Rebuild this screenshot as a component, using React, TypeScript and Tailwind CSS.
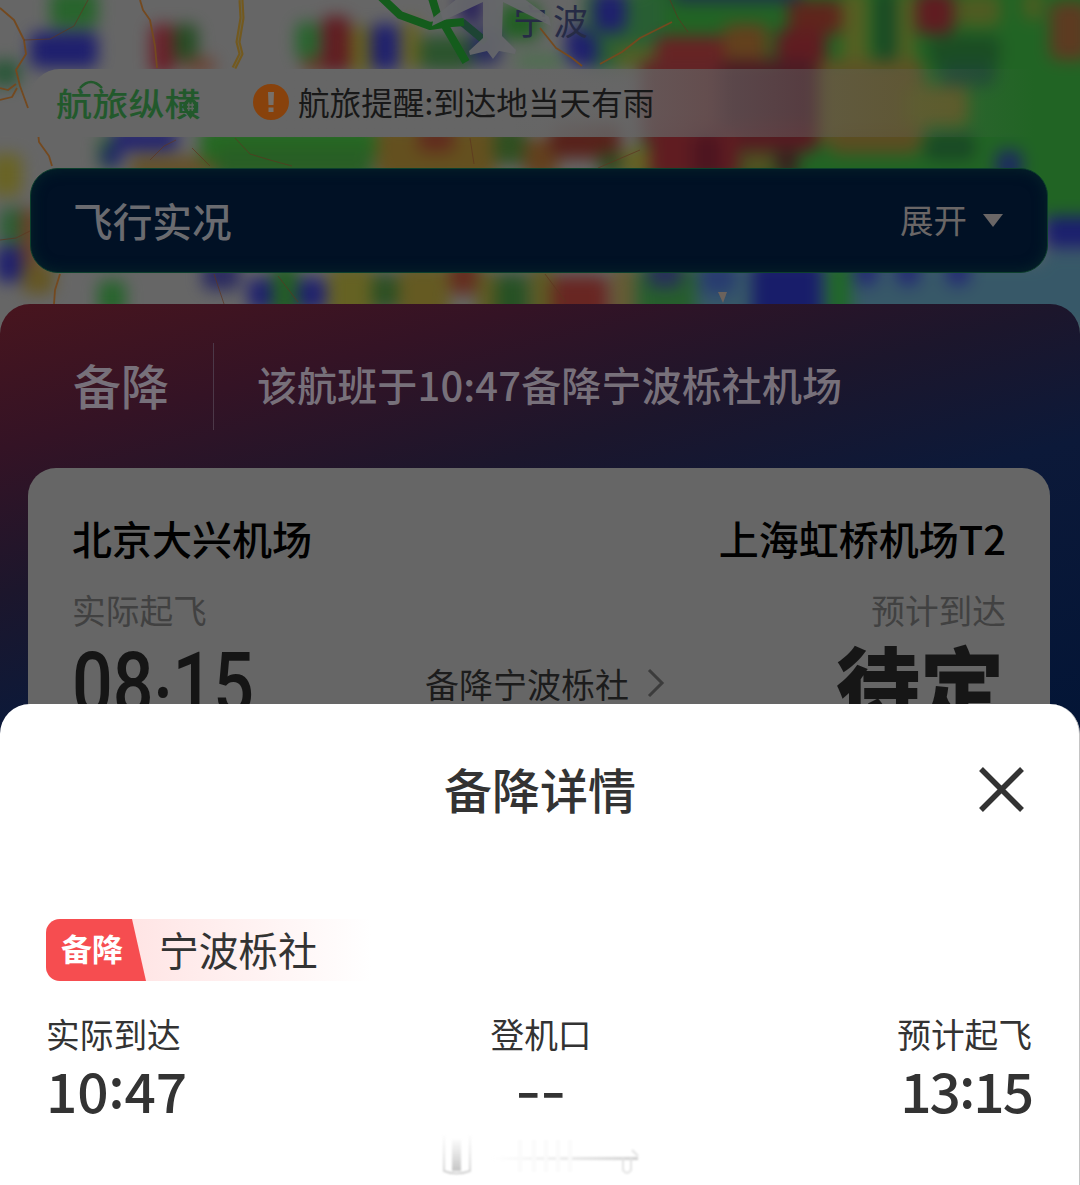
import React from 'react';
import { clsx } from 'clsx';

type Cell = [x: number, y: number, w: number, h: number, color: string];

const GREEN = '#1c661f';
const DARK_GREEN = '#154a22';
const BLUE = '#1e1f76';
const RED = '#661a20';
const YELLOW = '#66621c';
const BROWN = '#664019';
const SEA = '#34596a';
const LAND = '#666666';

// radar echoes, [x, y, width, height, color]
const echoes: Cell[] = [
  // large areas
  [640, -20, 460, 240, GREEN],
  [690, 262, 410, 60, SEA],
  [1040, 250, 60, 80, SEA],
  // above the banner
  [50, -10, 48, 38, '#236628'],
  [30, 32, 68, 36, BLUE],
  [-10, 60, 30, 26, '#265836'],
  [150, 24, 26, 50, '#70202a'],
  [174, 24, 24, 38, '#224e20'],
  [182, 58, 34, 14, '#70402f'],
  [296, 22, 24, 38, '#226628'],
  [302, 58, 26, 14, '#6a3822'],
  [322, 16, 28, 56, RED],
  [350, 26, 22, 48, YELLOW],
  [371, 24, 28, 46, BLUE],
  [402, 20, 18, 50, YELLOW],
  [420, 36, 52, 34, '#28552a'],
  [470, 30, 30, 34, '#252a62'],
  [458, -10, 26, 34, '#2b2460'],
  [500, 4, 40, 36, '#1e6020'],
  [566, 26, 28, 36, BLUE],
  [515, 54, 50, 14, '#48704a'],
  [584, -10, 80, 80, '#246030'],
  [594, -8, 32, 40, BLUE],
  [570, 34, 28, 32, BLUE],
  [615, 46, 50, 24, '#506020'],
  [656, 36, 74, 44, '#6e2122'],
  [672, -12, 130, 14, '#1c2d52'],
  [724, 24, 44, 40, BROWN],
  [788, 0, 54, 34, '#64241a'],
  [776, 30, 50, 50, RED],
  [842, -10, 26, 90, '#55601c'],
  [876, -10, 20, 76, DARK_GREEN],
  [898, -10, 16, 90, '#55601c'],
  [916, -8, 38, 42, RED],
  [956, -6, 44, 32, '#4e5c1c'],
  [930, 36, 70, 30, '#174e20'],
  [1024, -10, 18, 30, '#4e5c1c'],
  [1050, 2, 40, 58, '#603a1e'],
  // behind the banner
  [640, 60, 90, 82, '#662426'],
  [720, 60, 98, 82, '#4e1b24'],
  [818, 60, 106, 84, '#5e5220'],
  [906, 86, 62, 40, '#5c5a1c'],
  [940, 62, 55, 24, '#184a30'],
  // between banner and live bar
  [98, 136, 22, 34, '#256030'],
  [112, 130, 66, 20, BLUE],
  [102, 148, 20, 18, BLUE],
  [130, 156, 90, 22, '#665022'],
  [200, 126, 176, 36, '#1f6b1c'],
  [216, 146, 156, 34, '#246020'],
  [376, 126, 120, 54, '#665019'],
  [418, 126, 36, 26, '#662a1a'],
  [494, 126, 32, 38, '#2c501c'],
  [524, 138, 34, 40, BROWN],
  [550, 124, 70, 34, '#5c2018'],
  [598, 152, 24, 24, '#2f4a1c'],
  [622, 148, 30, 28, YELLOW],
  [650, 128, 90, 52, RED],
  [692, 134, 30, 46, '#521420'],
  [738, 126, 80, 26, '#5c1a20'],
  [742, 154, 32, 22, '#55501c'],
  [776, 148, 22, 30, '#3a1f1e'],
  [830, 134, 90, 20, '#5c4c1c'],
  [925, 134, 50, 26, DARK_GREEN],
  [996, 150, 26, 30, '#1b2a66'],
  // left edge
  [-10, 154, 32, 42, '#6a641e'],
  [0, 208, 28, 36, '#246030'],
  [20, 208, 20, 60, '#6c4024'],
  [-4, 246, 26, 36, BLUE],
  [22, 264, 32, 30, '#66561e'],
  // right edge
  [1044, 216, 56, 32, '#1a1f76'],
  // under live bar
  [98, 280, 28, 36, '#226628'],
  [202, 262, 38, 28, '#2a2a66'],
  [248, 278, 26, 32, BLUE],
  [272, 264, 26, 56, '#1f6020'],
  [298, 278, 28, 32, BLUE],
  [328, 266, 46, 60, YELLOW],
  [372, 274, 26, 36, '#285020'],
  [398, 266, 52, 60, '#665a1c'],
  [450, 260, 28, 34, '#6a2a1c'],
  [476, 270, 20, 56, '#5e5a1c'],
  [496, 274, 32, 50, '#225220'],
  [530, 266, 24, 60, '#5e5a1c'],
  [552, 276, 56, 50, '#6e2420'],
  [612, 266, 22, 60, '#665a2c'],
  [636, 266, 60, 60, '#226028'],
  [648, 258, 34, 30, '#26305e'],
  [700, 260, 36, 34, '#263c76'],
  [752, 260, 70, 66, '#171d72'],
  [827, 260, 24, 66, '#1a6a22'],
  [854, 256, 24, 30, '#232c7a'],
  [896, 256, 24, 30, '#232c7a'],
  [946, 256, 24, 30, '#232c7a'],
];

const roads = [
  'M0 8 L14 20 L24 40 L26 54 L16 70 L20 86 L28 108 M37 122 L39 142 L49 156 L52 166',
  'M140 0 L143 10 L150 20 L155 46 L157 68',
  'M0 88 L8 90 L16 84 M0 100 L12 97 L17 88',
  'M60 274 L55 290 L54 304',
  'M540 28 L556 48 L572 58 L582 66',
  'M600 64 L622 52 L640 38 L672 22',
];

const minorRoads = [
  'M24 40 L50 39 L74 26 L88 0',
  'M0 240 L16 238 L32 230',
  'M150 160 L164 146 L176 140 M192 148 L210 166 M235 138 L250 154 L270 160 L292 166',
  'M214 274 L224 304 M278 276 L298 302',
  'M470 138 L474 164 M545 274 L566 302 M598 168 L640 150',
  'M670 0 L678 18 L688 32',
];

function WeatherMap() {
  return (
    <svg className="absolute inset-0" width="1080" height="340" viewBox="0 0 1080 340">
      <defs>
        <filter id="soft" x="-5%" y="-20%" width="110%" height="140%" colorInterpolationFilters="sRGB">
          <feGaussianBlur stdDeviation="8" />
          <feColorMatrix type="saturate" values="0.9" />
        </filter>
      </defs>
      <rect width="1080" height="340" fill={LAND} />
      <g filter="url(#soft)">
        {echoes.map(([x, y, w, h, color], i) => (
          <rect key={i} x={x} y={y} width={w} height={h} rx="8" fill={color} />
        ))}
      </g>
      <g fill="none" strokeLinejoin="round">
        {roads.map((d) => (
          <path key={d} d={d} stroke="#74491f" strokeWidth="1.8" />
        ))}
        {minorRoads.map((d) => (
          <path key={d} d={d} stroke="#5c3520" strokeWidth="1" opacity="0.7" />
        ))}
        <path d="M241 0 L242 18 L238 42 L241 54 L234 68" stroke="#73591f" strokeWidth="5" />
        <path d="M241 0 L242 18 L238 42 L241 54 L234 68" stroke="#6a644c" strokeWidth="1" />
        {/* flown track */}
        <path d="M462 22 L486 42" stroke="#1d4434" strokeWidth="8" />
        <path d="M381 -3 L400 15 L430 26 L444 24 L466 62 M432 -2 L440 24 L464 22" stroke="#145c1c" strokeWidth="8" />
      </g>
      <path d="M718 292 L727 292 L723 303 Z" fill="#6b625c" />
      <text x="513" y="35" fontSize="35" letterSpacing="5" fill="#262b45" style={{ fontFamily: '"Noto Sans CJK SC", sans-serif' }}>
        宁波
      </text>
      {/* plane */}
      <path
        d="M483 -2 H523 L549 17 L551 26 L503 2 L502 36 L516 50 L515 54 L499 51 L493 59 L487 51 L470 55 L469 51 L483 38 L483 2 L436 24 L432 26 L434 17 L458 -2 Z"
        fill="#66676a"
        fillOpacity="0.92"
      />
    </svg>
  );
}

function BrandLogo() {
  return (
    <div className="relative ml-[26px] w-[197px]">
      <div className="origin-center -translate-y-px scale-y-[0.88] text-[36px] leading-[68px] font-medium tracking-[0.2px] text-[#22592c]">
        航旅纵横
      </div>
      <svg className="absolute top-0 left-0" width="150" height="68" viewBox="0 0 150 68">
        <path d="M24 19 Q35 7 46 19" fill="none" stroke="#22592c" strokeWidth="2.4" />
        <path d="M134.5 50 L128 41 A7.5 7.5 0 1 1 141 41 Z" fill="#22592c" />
        <path d="M131 36 H138 M131 39.5 H138 M132.8 33.5 V42 M136.2 33.5 V42" stroke="#5f6660" strokeWidth="1.3" />
      </svg>
    </div>
  );
}

function Notice() {
  return (
    <div className="mt-[69px] ml-[30px] flex h-[68px] w-[1005px] items-center rounded-tl-[30px] bg-linear-to-r from-[#666666] from-48% to-[#666666]/0">
      <BrandLogo />
      <svg className="mb-[2px]" width="36" height="36" viewBox="0 0 36 36">
        <circle cx="18" cy="18" r="18" fill="#88420c" />
        <path d="M15 8 H21 L20.5 21 H15.5 Z M15.5 23.5 H20.5 V28 H15.5 Z" fill="#77706a" />
      </svg>
      <span className="mb-[4px] ml-[9px] text-[31.6px] leading-[60px] text-[#181818]">航旅提醒:到达地当天有雨</span>
    </div>
  );
}

function LiveBar() {
  return (
    <div className="mt-[31px] ml-[30px] flex h-[105px] w-[1018px] items-center justify-between rounded-[28px] border border-[#0c3f2c] bg-[#011125] pr-[44px] pl-[42px] shadow-[inset_0_0_14px_#06262a]">
      <span className="mb-[2px] text-[39.7px] font-medium text-[#6a6b70]">飞行实况</span>
      <div className="flex items-center gap-[16px] text-[33.5px] text-[#6a6666]">
        <span className="mb-[2px]">展开</span>
        <svg width="20" height="13" viewBox="0 0 20 13">
          <path d="M0 0 H20 L10 13 Z" fill="#6a6666" />
        </svg>
      </div>
    </div>
  );
}

interface StopProps {
  airport: string;
  label: string;
  right?: boolean;
  children: React.ReactNode;
}

function Stop({ airport, label, right, children }: StopProps) {
  return (
    <div className={clsx('flex w-[330px] shrink-0 flex-col', right && 'items-end')}>
      <div className="h-[60px] text-[40px] leading-[60px] font-medium text-black">{airport}</div>
      <div className="mt-[17px] h-[50px] text-[33.7px] leading-[50px] text-[#414141]">{label}</div>
      {children}
    </div>
  );
}

function FlightCard() {
  return (
    <div className="mt-[31px] h-[430px] rounded-t-[30px] bg-[linear-gradient(165deg,#48151e_0px,#341325_140px,#1c162c_280px,#0c1939_410px,#031536_693px)] pl-[28px]">
      <div className="flex h-[164px] items-center pl-[45px]">
        <span className="mb-[5px] w-[140px] text-[48px] font-medium text-[#77707a]">备降</span>
        <span className="h-[87px] w-px bg-[#4c3848]" />
        <span className="mb-[4px] ml-[43px] text-[40px] font-medium tracking-[0.12px] text-[#77707a]">
          该航班于10:47备降宁波栎社机场
        </span>
      </div>
      <div className="flex h-[266px] w-[1022px] justify-between rounded-t-[28px] bg-[#666666] px-[44px] pt-[40px]">
        <Stop airport="北京大兴机场" label="实际起飞">
          <div className="mt-[4px] h-[90px] origin-left scale-x-[0.825] font-['Roboto'] text-[87px] leading-[90px] font-medium text-[#151515]">
            08<span className="relative top-[19px]">:</span>15
          </div>
        </Stop>
        <div className="mt-[150px] ml-[12px] flex h-[50px] items-center text-[34px] text-[#1c1c1c]">
          备降宁波栎社
          <svg className="ml-[18px]" width="18" height="30" viewBox="0 0 18 30">
            <path d="M2 2 L15 15 L2 28" fill="none" stroke="#3c3c3c" strokeWidth="3" />
          </svg>
        </div>
        <Stop airport="上海虹桥机场T2" label="预计到达" right>
          <div className="mt-[2px] mr-[2px] h-[90px] text-[84px] leading-[90px] font-black text-[#161616]">待定</div>
        </Stop>
      </div>
    </div>
  );
}

// times sit on a raised colon
function Time({ hours, minutes, className }: { hours: string; minutes: string; className?: string }) {
  return (
    <div className={clsx('text-[55px] leading-[61px] font-medium', className)}>
      {hours}
      <span className="relative -top-[5px]">:</span>
      {minutes}
    </div>
  );
}

function DiversionSheet() {
  return (
    <div className="absolute inset-x-0 top-[704px] h-[481px] rounded-t-[30px] border-r border-[#c4c4c4] bg-white pr-[45px] pl-[46px] text-[#333333]">
      <div className="flex h-[171px] items-center justify-center">
        <h2 className="mb-[4px] ml-[55px] flex-1 text-center text-[48px] font-medium">备降详情</h2>
        <button className="mr-[10px]">
          <svg width="45" height="45" viewBox="0 0 45 45">
            <path d="M2 2 L43 43 M43 2 L2 43" stroke="#333333" strokeWidth="5.5" />
          </svg>
        </button>
      </div>

      <div className="mt-[44px] flex h-[62px] w-[325px] items-center rounded-l-[14px] bg-linear-to-r from-[#ffe4e4] from-25% to-white">
        <div className="flex h-full w-[100px] items-center rounded-l-[14px] bg-[#f64d50] pb-[3px] pl-[15px] text-[31px] font-bold text-white [clip-path:polygon(0_0,86px_0,100px_100%,0_100%)]">
          备降
        </div>
        <span className="mb-[3px] ml-[13px] text-[39.7px]">宁波栎社</span>
      </div>

      <div className="mt-[28px] grid grid-cols-3 text-[33.7px] leading-[50px]">
        <div>
          实际到达
          <Time hours="10" minutes="47" className="tracking-[-0.2px]" />
        </div>
        <div className="pl-[2px] text-center">
          登机口
          <div className="-mt-[3px] scale-x-[1.25] text-[56px] leading-[62px] font-medium">--</div>
        </div>
        <div className="pr-[2px] text-right">
          预计起飞
          <Time hours="13" minutes="15" className="tracking-[-2px]" />
        </div>
      </div>

      <svg className="absolute top-[428px] left-[440px]" width="202" height="46" viewBox="0 0 202 46">
        <defs>
          <linearGradient id="fade" x1="0" y1="0" x2="0" y2="1">
            <stop offset="0" stopColor="#cccccc" stopOpacity="0.1" />
            <stop offset="1" stopColor="#c4c4c4" />
          </linearGradient>
          <linearGradient id="streak" x1="0" y1="0" x2="1" y2="0">
            <stop offset="0" stopColor="#dddddd" stopOpacity="0" />
            <stop offset="1" stopColor="#cfcfcf" />
          </linearGradient>
          <filter id="smear">
            <feGaussianBlur stdDeviation="1" />
          </filter>
        </defs>
        <g filter="url(#smear)">
          <path d="M4 4 V39 Q16 44 30 39 V4" fill="none" stroke="url(#fade)" strokeWidth="1.5" />
          <rect x="12" y="8" width="9" height="31" fill="url(#fade)" />
          <rect x="50" y="25" width="148" height="3" fill="url(#streak)" />
          <path d="M183 26 V38 Q187 44 191 38 V26 M192 18 L198 24" fill="none" stroke="#e2e2e2" strokeWidth="2" />
          <path d="M80 8 V40 M94 8 V40 M106 8 V40 M118 8 V40 M130 8 V40" stroke="#fafafa" strokeWidth="4" />
        </g>
      </svg>
    </div>
  );
}

export default function App() {
  return (
    <div className="relative flex h-[1185px] w-[1080px] flex-col overflow-hidden bg-[#031536] font-['Noto_Sans_CJK_SC',sans-serif]">
      <WeatherMap />
      <div className="relative flex flex-col">
        <Notice />
        <LiveBar />
        <FlightCard />
      </div>
      <DiversionSheet />
    </div>
  );
}
